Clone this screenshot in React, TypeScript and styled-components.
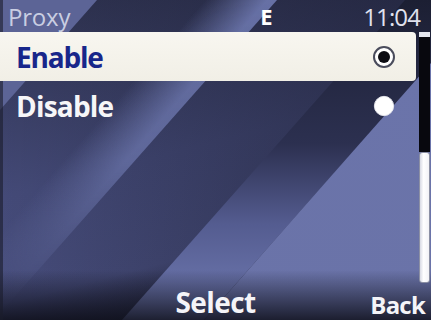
import React from "react";
import styled, { createGlobalStyle } from "styled-components";

const GlobalStyle = createGlobalStyle`
  html, body {
    margin: 0;
    padding: 0;
    background: #000;
  }
  #root {
    width: 431px;
    height: 320px;
    overflow: hidden;
  }
`;

const FONT = `"Open Sans", "DejaVu Sans", sans-serif`;

const Screen = styled.div`
  position: relative;
  width: 431px;
  height: 320px;
  overflow: hidden;
  font-family: ${FONT};
  display: flex;
  flex-direction: column;
  background: #33375a;
`;

const Wallpaper = styled.svg`
  position: absolute;
  inset: 0;
  z-index: 0;
`;

const Header = styled.div`
  position: relative;
  z-index: 1;
  height: 32px;
  display: flex;
  align-items: center;
  padding: 0 11px 0 8px;
  font-size: 24px;
  letter-spacing: -0.2px;
  color: #c9cee2;
`;

const Title = styled.div`
  flex: 1;
`;

const Bearer = styled.div`
  font-weight: 700;
  color: #fff;
  font-size: 22px;
  margin-right: 91px;
`;

const Clock = styled.div`
  color: #e0e2ee;
  letter-spacing: -0.9px;
`;

const Main = styled.div`
  position: relative;
  z-index: 1;
  height: 256px;
  display: flex;
  gap: 3px;
`;

const List = styled.div`
  width: 416px;
  display: flex;
  flex-direction: column;
`;

const Row = styled.div<{ $active?: boolean }>`
  height: 49px;
  box-sizing: border-box;
  display: flex;
  align-items: center;
  justify-content: space-between;
  padding: 0 21px 0 16px;
  font-size: 28px;
  font-weight: 700;
  letter-spacing: ${(p) => (p.$active ? "-1.2px" : "-0.8px")};
  color: ${(p) => (p.$active ? "#18268a" : "#f6f6f8")};
  background: ${(p) =>
    p.$active ? "linear-gradient(180deg, #f8f6f0 0%, #f1efe6 100%)" : "transparent"};
  border-radius: 0 4px 4px 0;
`;

const Radio = styled.span<{ $checked?: boolean }>`
  width: 22px;
  height: 22px;
  box-sizing: border-box;
  border-radius: 50%;
  display: flex;
  align-items: center;
  justify-content: center;
  background: #fff;
  border: ${(p) => (p.$checked ? "2px solid #4a4c5c" : "1px solid #e8e8ee")};
  transform: scale(${(p) => (p.$checked ? 1 : 0.92)});

  &::after {
    content: "";
    display: ${(p) => (p.$checked ? "block" : "none")};
    width: 12px;
    height: 12px;
    border-radius: 50%;
    background: #0c0c12;
  }
`;

const Scroll = styled.div`
  width: 11px;
  display: flex;
  flex-direction: column;
`;

const ScrollCap = styled.div`
  height: 5px;
  background: #e4e6ee;
`;

const ScrollTrack = styled.div`
  height: 115px;
  background: #08080e;
`;

const ScrollThumb = styled.div`
  height: 131px;
  box-sizing: border-box;
  background: linear-gradient(90deg, #d8dae4 0%, #ffffff 40%, #f2f2f6 100%);
  border: 1px solid #8c90a4;
  border-radius: 3px;
`;

const Softkeys = styled.div`
  position: relative;
  z-index: 1;
  height: 32px;
  display: grid;
  grid-template-columns: 1fr auto 1fr;
  align-items: start;
  padding: 0 6px;
  font-weight: 700;
  color: #f4f4f8;
`;

const Key = styled.div<{ $end?: boolean; $small?: boolean }>`
  justify-self: ${(p) => (p.$end ? "end" : "start")};
  font-size: ${(p) => (p.$small ? "24px" : "28px")};
  line-height: 28px;
  letter-spacing: ${(p) => (p.$small ? "-0.8px" : "-0.6px")};
  margin-top: ${(p) => (p.$small ? "3px" : "0")};
`;

// stripes run along x = u - 0.885 * y
const band = (u1: number, u2: number) =>
  `${u1},0 ${u2},0 ${u2 - 283},320 ${u1 - 283},320`;

const Background = () => (
  <Wallpaper width="431" height="320" viewBox="0 0 431 320">
    <defs>
      <linearGradient id="base" x1="0" y1="0" x2="0.35" y2="1">
        <stop offset="0" stopColor="#2e3250" />
        <stop offset="0.55" stopColor="#444a78" />
        <stop offset="0.85" stopColor="#474d7c" />
        <stop offset="1" stopColor="#2a2d48" />
      </linearGradient>
      <linearGradient id="dim" x1="0" y1="0" x2="1" y2="0">
        <stop offset="0" stopColor="#000" stopOpacity="0" />
        <stop offset="1" stopColor="#0c0d18" stopOpacity="0.45" />
      </linearGradient>
      <linearGradient id="lightBand" gradientUnits="userSpaceOnUse" x1="205" y1="0" x2="240" y2="31">
        <stop offset="0" stopColor="#6a74aa" stopOpacity="0" />
        <stop offset="1" stopColor="#6a74aa" stopOpacity="0.95" />
      </linearGradient>
      <linearGradient id="fadeDown" x1="0" y1="0" x2="0" y2="1">
        <stop offset="0" stopColor="#fff" stopOpacity="1" />
        <stop offset="0.5" stopColor="#fff" stopOpacity="0.8" />
        <stop offset="0.85" stopColor="#fff" stopOpacity="0.15" />
        <stop offset="1" stopColor="#fff" stopOpacity="0" />
      </linearGradient>
      <mask id="bandMask">
        <rect width="431" height="320" fill="url(#fadeDown)" />
      </mask>
      <linearGradient id="midBand" x1="0" y1="0" x2="0" y2="1">
        <stop offset="0" stopColor="#1c1f33" />
        <stop offset="0.45" stopColor="#2c3050" />
        <stop offset="0.7" stopColor="#545c90" />
        <stop offset="1" stopColor="#727cb4" />
      </linearGradient>
      <linearGradient id="rightBand" x1="0" y1="0" x2="0" y2="1">
        <stop offset="0" stopColor="#6b74aa" />
        <stop offset="1" stopColor="#6a73a8" />
      </linearGradient>
      <linearGradient id="shade" x1="0" y1="0" x2="0" y2="1">
        <stop offset="0" stopColor="#0e0f1a" stopOpacity="0" />
        <stop offset="1" stopColor="#0e0f1a" stopOpacity="0.85" />
      </linearGradient>
    </defs>
    <rect width="431" height="320" fill="url(#base)" />
    <rect width="431" height="320" fill="url(#dim)" />
    <polygon points="0,0 97,0 0,110" fill="#5c6496" />
    <polygon points={band(205, 277)} fill="url(#lightBand)" mask="url(#bandMask)" />
    <polygon points={band(405, 487)} fill="url(#midBand)" />
    <polygon points="431,63 431,320 204,320" fill="url(#rightBand)" />
    <rect x="0" y="270" width="431" height="50" fill="url(#shade)" />
    <rect x="0" y="0" width="3" height="320" fill="#1a1c2c" opacity="0.6" />
  </Wallpaper>
);

export default function App() {
  return (
    <>
      <GlobalStyle />
      <Screen>
        <Background />
        <Header>
          <Title>Proxy</Title>
          <Bearer>E</Bearer>
          <Clock>11:04</Clock>
        </Header>
        <Main>
          <List>
            <Row $active>
              Enable
              <Radio $checked />
            </Row>
            <Row>
              Disable
              <Radio />
            </Row>
          </List>
          <Scroll>
            <ScrollCap />
            <ScrollTrack />
            <ScrollThumb />
          </Scroll>
        </Main>
        <Softkeys>
          <span />
          <Key>Select</Key>
          <Key $end $small>
            Back
          </Key>
        </Softkeys>
      </Screen>
    </>
  );
}
